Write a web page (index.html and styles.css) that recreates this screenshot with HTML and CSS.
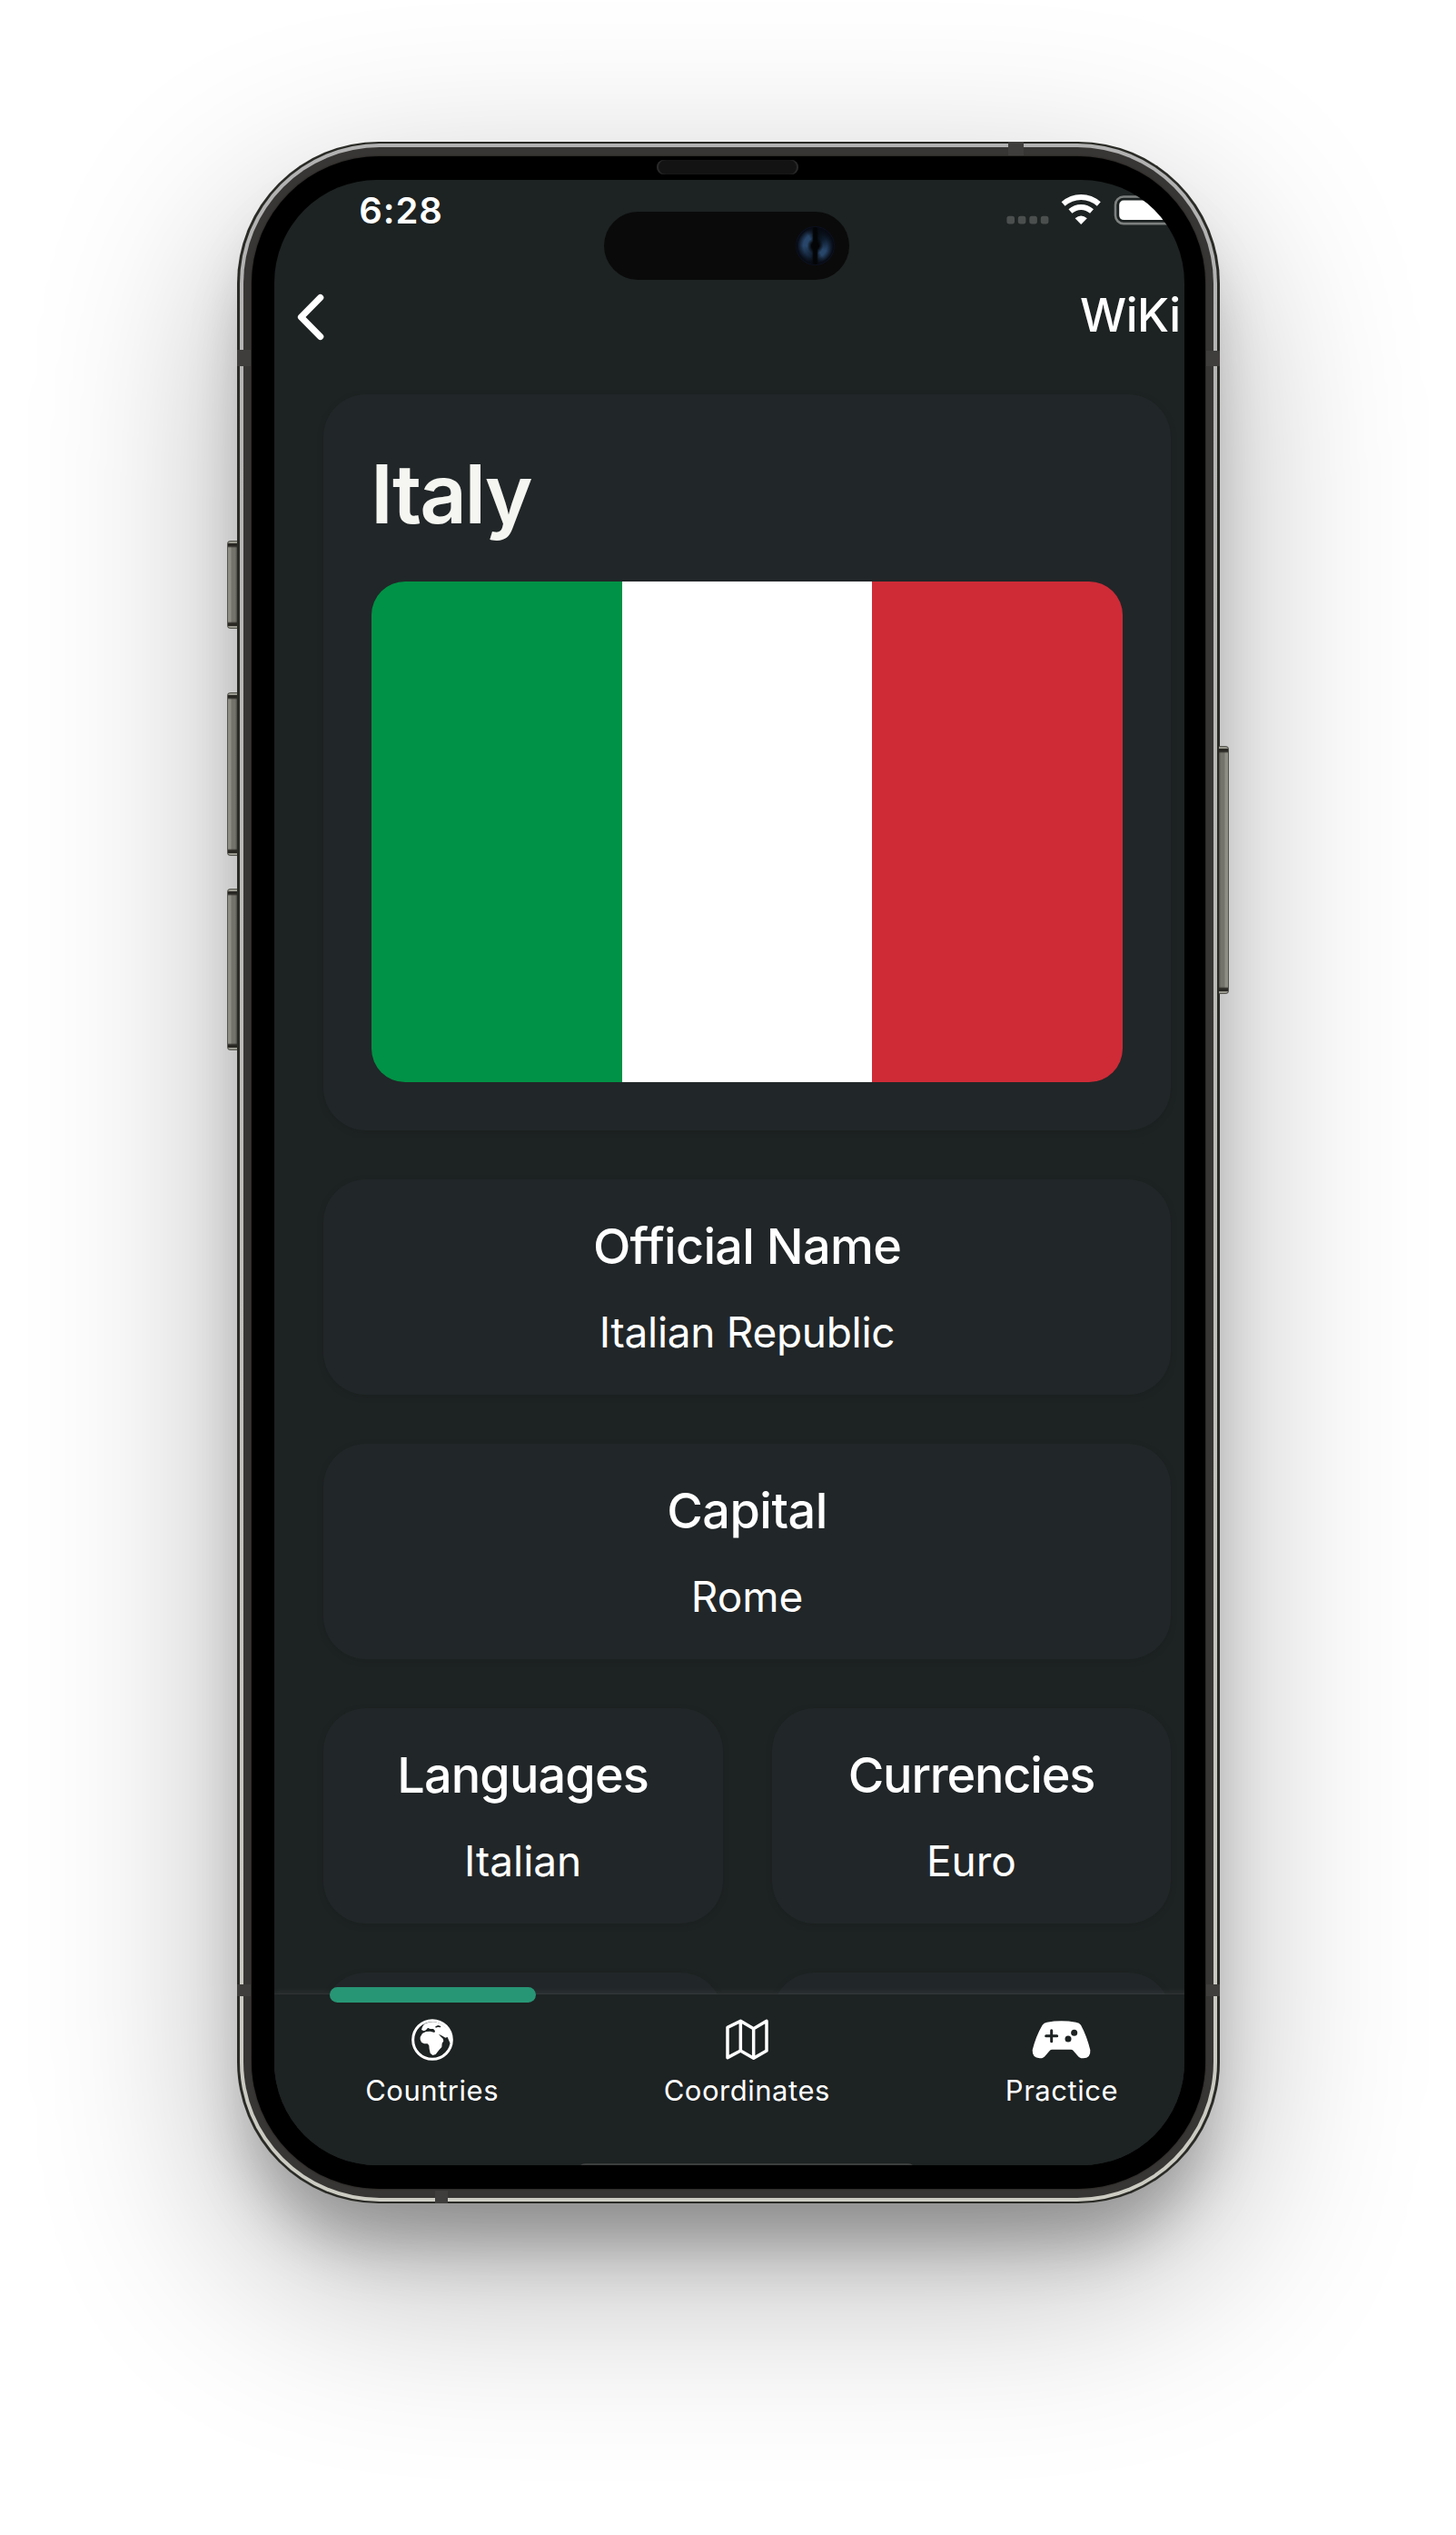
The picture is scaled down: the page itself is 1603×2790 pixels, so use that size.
FILE: index.html
```html
<!DOCTYPE html>
<html lang="en">
<head>
<meta charset="utf-8">
<title>WiKi – Italy</title>
<link rel="stylesheet" href="styles.css">
</head>
<body>
<div class="phone">
  <span class="key key-action"></span>
  <span class="key key-up"></span>
  <span class="key key-down"></span>
  <span class="key key-power"></span>
  <div class="rim">
    <div class="band">
      <div class="bezel">
        <div class="screen">
          <div class="app">
            <div class="status">
              <span class="time">6:28</span>
              <svg class="status-icons" width="210" height="36" viewBox="0 0 210 36">
                <g fill="#4b4f4e">
                  <rect x="0.4" y="23.8" width="8.6" height="8.6" rx="2.6"/>
                  <rect x="12.8" y="23.8" width="8.6" height="8.6" rx="2.6"/>
                  <rect x="25.3" y="23.8" width="8.6" height="8.6" rx="2.6"/>
                  <rect x="37.8" y="23.8" width="8.6" height="8.6" rx="2.6"/>
                </g>
                <g fill="none" stroke="#fff" stroke-width="6">
                  <path d="M62.6 10.6C74 .6 90.400 .6 101.800 10.600"/>
                  <path d="M70.400 18.600C77.500 12.400 86.900 12.400 94 18.600"/>
                </g>
                <path d="M82.200 33L75.600 26.300Q82.200 20.800 88.800 26.300Z" fill="#fff"/>
                <rect x="120" y="2.500" width="70" height="29.600" rx="9" fill="none" stroke="#7c807f" stroke-width="2.600"/>
                <rect x="124.200" y="6.500" width="61" height="21.600" rx="5" fill="#fff"/>
              </svg>
            </div>
            <div class="header">
              <svg width="32" height="54" viewBox="0 0 32 54"><path d="M26.700 5.500L5.500 27L26.700 48.500" fill="none" stroke="#fff" stroke-width="7.200" stroke-linecap="round" stroke-linejoin="round"/></svg>
              <span class="header-title">WiKi</span>
            </div>
            <div class="content">
              <section class="card hero">
                <h1>Italy</h1>
                <div class="flag"><span class="green"></span><span class="white"></span><span class="red"></span></div>
              </section>
              <section class="card"><h2>Official Name</h2><p class="long">Italian Republic</p></section>
              <section class="card"><h2 class="capital">Capital</h2><p>Rome</p></section>
              <div class="pair">
                <section class="card"><h2 class="languages">Languages</h2><p>Italian</p></section>
                <section class="card"><h2 class="currencies">Currencies</h2><p>Euro</p></section>
              </div>
              <div class="pair">
                <section class="card"></section>
                <section class="card"></section>
              </div>
            </div>
            <nav class="tabs">
              <span class="marker"></span>
              <div class="tab">
                <svg width="46" height="46" viewBox="0 0 138 138">
                  <circle cx="69" cy="69" r="64" fill="none" stroke="#fff" stroke-width="9"/>
                  <path fill="#fff" d="M42 17L36 26L33 36L41 40L48 37L54 30L62 33L72 33L78 40L76 45L62 41L48 42L36 48L29 60L29 68L33 77L42 82L53 82L58 88L59 99L62 113L70 120L80 117L91 103L100 93L101 81L106 73L104 65L96 58L90 50L102 56L112 62L119 60L123 70L127 79L134 80A64 64 0 0 0 42 17Z"/>
                  <path fill="#1d2222" d="M79 25L88 21L97 24L96 28L87 27L80 29ZM50 35L56 30L60 36L68 33L76 37L74 41L62 38L50 39Z"/>
                </svg>
                <span>Countries</span>
              </div>
              <div class="tab">
                <svg width="47" height="46" viewBox="0 0 141 138">
                  <path d="M6 28L49 7L92 32L135 7V105L92 130L49 105L6 128ZM49 7V105M92 32V130" fill="none" stroke="#fff" stroke-width="10.500" stroke-linejoin="round"/>
                </svg>
                <span>Coordinates</span>
              </div>
              <div class="tab">
                <svg width="65" height="46" viewBox="0 0 195 138">
                  <path fill="#fff" d="M35 20Q40 12 50 11Q97 3 146 11Q157 12 162 20Q182 57 193 103Q195 130 170 130Q158 131 150 120L137 105Q134 101 129 101H67Q62 101 59 105L46 120Q38 131 26 130Q1 129 2 103Q13 57 35 20Z"/>
                  <path d="M47 56H83M65 38V74" stroke="#1d2222" stroke-width="9" stroke-linecap="round"/>
                  <circle cx="140" cy="46" r="10.500" fill="#1d2222"/><circle cx="120" cy="66" r="10.500" fill="#1d2222"/>
                </svg>
                <span>Practice</span>
              </div>
            </nav>
            <span class="home"></span>
          </div>
        </div>
      </div>
    </div>
  </div>
  <span class="speaker"></span>
  <span class="island"><span class="lens"></span></span>
  <span class="gap gap-top"></span>
  <span class="gap gap-bottom"></span>
  <span class="gap gap-side gap-lu"></span>
  <span class="gap gap-side gap-ru"></span>
  <span class="gap gap-side gap-ll"></span>
  <span class="gap gap-side gap-rl"></span>
</div>
</body>
</html>
```
FILE: styles.css
```css
* { box-sizing: border-box; }
body {
  margin: 0;
  height: 2790px;
  padding: 156px 0 0 261.3px;
  background: #fff;
  font-family: Inter, "Liberation Sans", sans-serif;
  color: #fff;
  overflow: hidden;
}

/* Device shell */
.phone {
  position: relative;
  width: 1081.4px;
  height: 2268.7px;
  padding: 2px 2.700px;
  border-radius: 156px;
  background: #2a2a26;
  box-shadow: 0 58px 64px -14px rgba(0,0,0,.26), 0 76px 220px rgba(0,0,0,.31);
}
.rim {
  height: 100%;
  padding: 4px;
  border-radius: 154px;
  background: linear-gradient(#b2b2b2, #bdbcb9 50%, #cdccc3);
}
.band {
  height: 100%;
  padding: 9.500px 9.300px;
  border-radius: 150px;
  background: #383634;
}
.bezel {
  height: 100%;
  padding: 26.200px 22.700px 26px 25px;
  border-radius: 140px;
  background: #000;
  box-shadow: 0 0 2px #161412;
}
.screen {
  height: 100%;
  border-radius: 113px;
  overflow: hidden;
  background: #1d2222;
}
.key {
  position: absolute;
  left: -11px;
  width: 11px;
  border: 1px solid #55554e;
  border-right: 0;
  border-radius: 4px 0 0 4px;
  background:
    linear-gradient(#9a998f 0 2px, #2a2823 2px 5px, transparent 7px calc(100% - 7px), #2a2823 calc(100% - 5px) calc(100% - 2px), #9a998f calc(100% - 2px)),
    linear-gradient(90deg, #8e8e85 0 3px, #74736b 4px 8px, #4c4b45);
}
.key-action { top: 438.500px; height: 97px; }
.key-up { top: 605.500px; height: 180px; }
.key-down { top: 822px; height: 178px; }
.key-power { top: 665px; height: 273px; left: 1081px; transform: scaleX(-1); }
.gap { position: absolute; background: #403e3c; }
.gap-top { left: 849px; top: 0; width: 17px; height: 15px; }
.gap-bottom { left: 218px; bottom: 0; width: 14px; height: 14px; }
.gap-side { width: 15px; left: 0; }
.gap-lu { top: 228.500px; height: 18px; }
.gap-ru { top: 230px; height: 17px; left: auto; right: 0; }
.gap-ll { top: 2028px; height: 13px; }
.gap-rl { top: 2028px; height: 13px; left: auto; right: 0; }
.speaker {
  position: absolute;
  left: 461.700px;
  top: 19.500px;
  width: 156px;
  height: 16px;
  border-radius: 8px;
  background: #131313;
  box-shadow: inset 2px 0 1px #2b2b2b, inset -2px 0 1px #2b2b2b;
}
.island {
  position: absolute;
  left: 403.700px;
  top: 76.900px;
  width: 270px;
  height: 75px;
  padding: 16.500px 16px 0 0;
  border-radius: 38px;
  background: #0a0a0a;
}
.lens {
  display: block;
  width: 43px;
  height: 43px;
  margin-left: auto;
  border: 1px solid #0b1020;
  border-radius: 50%;
  background:
    linear-gradient(90deg, transparent 42%, #030405 46% 54%, transparent 58%),
    radial-gradient(circle, #030405 0 4px, transparent 9px 13px, #070a12 20px),
    conic-gradient(#05070a, #0c1a2a 50deg, #28466a 115deg, #28466a 145deg, #05070a 180deg, #122235 205deg, #28466a 270deg, #28466a 325deg, #05070a);
}

/* The app is laid out a little wider than the visible screen */
.app {
  position: relative;
  width: 1040px;
  height: 100%;
  display: flex;
  flex-direction: column;
}
.status { display: flex; height: 94px; }
.time {
  width: 713px;
  margin-left: 93px;
  padding-top: 10.500px;
  font-size: 40px;
  line-height: 48px;
  font-weight: 600;
  letter-spacing: .9px;
}
.status-icons { margin-top: 16px; }
.header {
  display: flex;
  align-items: center;
  justify-content: space-between;
  height: 110px;
  padding: 0 42.500px 0 23.500px;
}
.header svg { margin-top: 5px; }
.header-title { font-size: 51px; line-height: 60px; font-weight: 540; letter-spacing: -.45px; }

.content {
  flex: 1;
  min-height: 0;
  overflow: hidden;
  padding: 32.700px 53px 0 53.500px;
  display: flex;
  flex-direction: column;
  gap: 54px;
}
.card {
  flex: none;
  height: 237px;
  padding-top: 42px;
  border-radius: 47px;
  background: #212628;
  box-shadow: 0 2px 8px rgba(0,0,0,.09);
  text-align: center;
}
.hero { height: 809.800px; padding: 56px 53.300px 0; text-align: left; }
h1, h2, p { margin: 0; }
h1 {
  font-size: 90px;
  line-height: 108px;
  font-weight: 600;
  letter-spacing: -2.200px;
  text-indent: -1px;
  color: #f5f6f1;
}
h2 { font-size: 54px; line-height: 64px; font-weight: 520; letter-spacing: -.72px; }
.capital { letter-spacing: -.5px; }
.languages { letter-spacing: -.88px; }
.currencies { letter-spacing: -1.180px; }
p { margin-top: 34px; font-size: 46px; line-height: 56px; letter-spacing: -.05px; }
.long { letter-spacing: -.3px; }
.flag {
  display: grid;
  grid-template-columns: repeat(3, 1fr);
  height: 551px;
  margin-top: 41.300px;
  border-radius: 37px;
  overflow: hidden;
}
.green { background: #009246; }
.white { background: #fff; }
.red { background: #ce2b37; }
.pair { flex: none; display: grid; grid-template-columns: 1fr 1fr; gap: 54px; }

.tabs {
  position: relative;
  display: grid;
  grid-template-columns: repeat(3, 1fr);
  height: 188.700px;
  padding-top: 27.300px;
  background: #1d2222;
  box-shadow: 0 -1px 8px rgba(255,255,255,.1), 0 -1px 0 rgba(255,255,255,.03);
}
.tab { display: flex; flex-direction: column; align-items: center; font-size: 31px; line-height: 38px; letter-spacing: .53px; }
.tab svg { display: block; margin-bottom: 14.500px; }
.marker {
  position: absolute;
  left: 60.500px;
  top: -8px;
  width: 227px;
  height: 17px;
  border-radius: 9px;
  background: #279675;
}
.home {
  position: absolute;
  left: 335px;
  bottom: -12px;
  width: 370px;
  height: 14px;
  border-radius: 7px;
  background: #3b3f3e;
}
```
